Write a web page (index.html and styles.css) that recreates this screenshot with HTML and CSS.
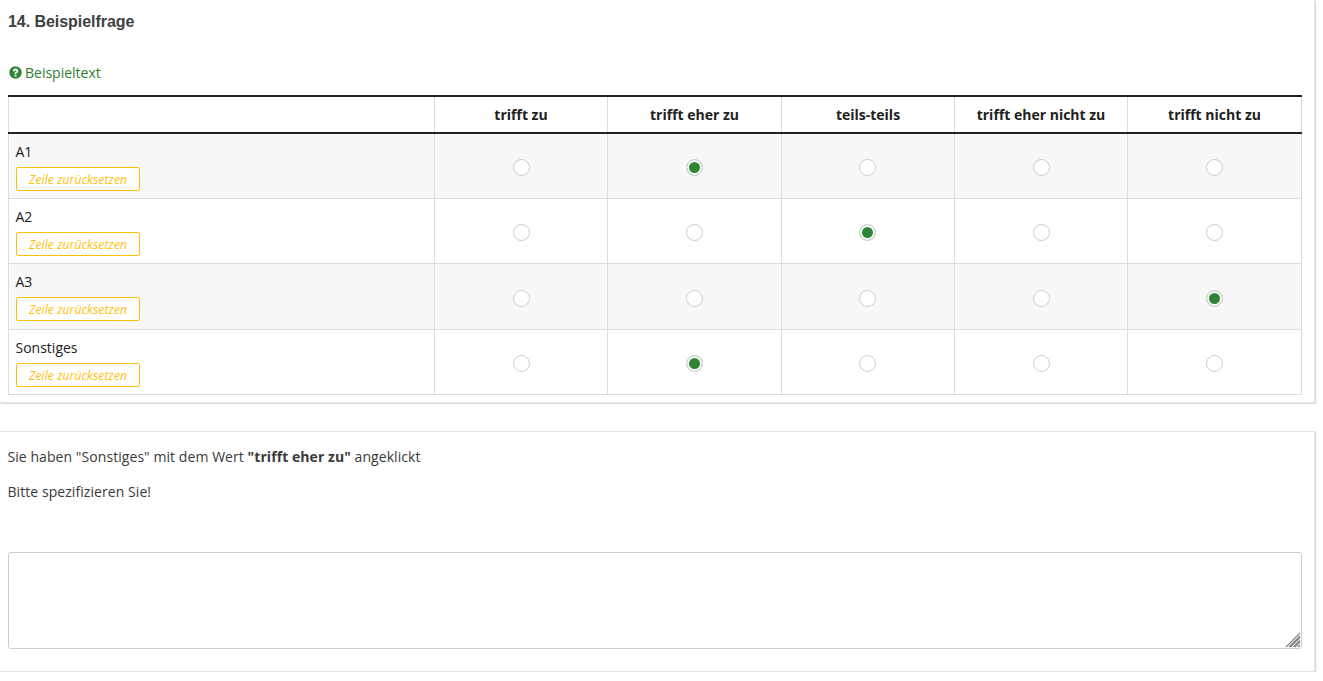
FILE: index.html
```html
<!DOCTYPE html>
<html lang="de">
<head>
<meta charset="utf-8">
<title>Beispielfrage</title>
<link rel="stylesheet" href="styles.css">
</head>
<body>
<div class="page">
<section class="panel panel-question">
  <h2 class="title">14. Beispielfrage</h2>
  <p class="hint"><svg class="hint-icon" viewBox="0 0 24 24" aria-hidden="true"><path fill="#2e8538" fill-rule="evenodd" d="M12 .5a11.500 11.500 0 1 0 0 23 11.500 11.500 0 0 0 0-23zm1.800 19h-3.600v-3.400h3.600zm2.900-8.100c-.4.600-1 1.100-1.700 1.500-.6.400-1 .7-1.100 1-.1.200-.2.500-.2.900h-3.400c0-1 .1-1.700.4-2.200.3-.5.800-1 1.500-1.400.6-.4 1-.7 1.200-.9.200-.3.300-.6.300-.9 0-.4-.1-.6-.4-.9-.3-.2-.6-.3-1.100-.3-.5 0-.9.200-1.200.5-.3.300-.5.800-.6 1.500L7.200 9.200c.1-1.400.6-2.500 1.400-3.300.9-.8 2.100-1.100 3.500-1.100 1.500 0 2.700.4 3.600 1.100.9.800 1.300 1.800 1.300 2.900 0 .9-.3 1.700-.7 2.600z"/></svg>Beispieltext</p>
  <table class="matrix">
    <colgroup><col class="col-label"><col class="col-a"><col class="col-b"><col class="col-a"><col class="col-a"><col class="col-b"></colgroup>
    <thead>
      <tr><th></th><th>trifft zu</th><th>trifft eher zu</th><th>teils-teils</th><th>trifft eher nicht zu</th><th>trifft nicht zu</th></tr>
    </thead>
    <tbody>
      <tr class="odd">
        <td class="label">A1<button class="reset" type="button">Zeile zurücksetzen</button></td>
        <td><input class="radio" type="radio" name="a1"></td><td><input class="radio" type="radio" name="a1" checked></td><td><input class="radio" type="radio" name="a1"></td><td><input class="radio" type="radio" name="a1"></td><td><input class="radio" type="radio" name="a1"></td>
      </tr>
      <tr>
        <td class="label">A2<button class="reset" type="button">Zeile zurücksetzen</button></td>
        <td><input class="radio" type="radio" name="a2"></td><td><input class="radio" type="radio" name="a2"></td><td><input class="radio" type="radio" name="a2" checked></td><td><input class="radio" type="radio" name="a2"></td><td><input class="radio" type="radio" name="a2"></td>
      </tr>
      <tr class="odd tall">
        <td class="label">A3<button class="reset" type="button">Zeile zurücksetzen</button></td>
        <td><input class="radio" type="radio" name="a3"></td><td><input class="radio" type="radio" name="a3"></td><td><input class="radio" type="radio" name="a3"></td><td><input class="radio" type="radio" name="a3"></td><td><input class="radio" type="radio" name="a3" checked></td>
      </tr>
      <tr>
        <td class="label">Sonstiges<button class="reset" type="button">Zeile zurücksetzen</button></td>
        <td><input class="radio" type="radio" name="a4"></td><td><input class="radio" type="radio" name="a4" checked></td><td><input class="radio" type="radio" name="a4"></td><td><input class="radio" type="radio" name="a4"></td><td><input class="radio" type="radio" name="a4"></td>
      </tr>
    </tbody>
  </table>
</section>
<section class="panel panel-followup">
  <p class="line">Sie haben "Sonstiges" mit dem Wert <strong>"trifft eher zu"</strong> angeklickt</p>
  <p class="line line-second">Bitte spezifizieren Sie!</p>
  <div class="answer-wrap">
    <textarea class="answer"></textarea>
    <svg class="grip" viewBox="0 0 16 16" aria-hidden="true"><path d="M1 15 15 1M4 15 15 4M5.500 15 15 5.500M8.500 15 15 8.500M10 15l5-5M13 15l2-2" stroke="#858585" stroke-width="1.200" fill="none"/></svg>
  </div>
</section>
</div>
</body>
</html>
```
FILE: styles.css
```css
* { box-sizing: border-box; }
html, body { margin: 0; padding: 0; background: #fff; }
body { font-family: "Open Sans", sans-serif; font-size: 14px; line-height: 20px; color: #3a3a3a; overflow: hidden; }
.page { width: 1315px; }
.panel { background: #fff; border: 1px solid #e4e4e4; border-left: 0; box-shadow: 1px 1px 1px #ddd; padding: 0 12px 0 8px; }
.panel-question { border-top: 0; height: 403px; padding-top: 12px; }
.panel-followup { margin-top: 28px; height: 241px; padding-top: 15px; }
.title { margin: 0; font-family: "Liberation Sans", Arial, sans-serif; font-size: 16px; line-height: 20px; font-weight: 700; letter-spacing: -.05px; color: #404040; }
.hint { margin: 31px 0 0; height: 20px; color: #2e7d32; display: flex; align-items: center; }
.hint-icon { width: 13px; height: 13px; margin: 0 3px 1px 1px; }
.matrix { margin-top: 12px; width: 1294px; table-layout: fixed; border-collapse: collapse; color: #212121; }
.col-label { width: 426px; }
.col-a { width: 173px; }
.col-b { width: 174px; }
.matrix th { height: 37px; padding: 0; border: 1px solid #ddd; border-top: 2px solid #222; border-bottom: 2px solid #222; text-align: center; font-weight: 700; color: #212121; }
.matrix td { height: 65px; padding: 0; border: 1px solid #ddd; text-align: center; vertical-align: middle; }
.matrix tr.tall td { height: 66px; }
.matrix td:nth-child(4) { padding-right: 1px; }
.matrix tr.odd td { background: #f8f8f8; }
.matrix td.label { text-align: left; padding: 7px 7px 6px 6.500px; line-height: 20px; }
.reset { display: block; width: 124px; height: 24px; margin: 5px 0 0 .5px; padding: 2px 0 0; background: #fff; border: 1px solid #ffc107; border-radius: 2px; color: #ffc107; font: italic 12px/20px "Open Sans", sans-serif; letter-spacing: .11px; }
.radio { appearance: none; display: block; width: 17px; height: 17px; margin: 4px auto 0; background: #fff; border: 1px solid #ccc; border-radius: 50%; }
.radio:checked { background: #2e8538; background-clip: padding-box; box-shadow: inset 0 0 0 2px #fff; }
.line { margin: 0 0 0 -.5px; height: 20px; letter-spacing: .065px; }
.line-second { margin-top: 15px; }
.answer-wrap { position: relative; margin-top: 50px; width: 1294px; height: 97px; }
.answer { display: block; width: 100%; height: 100%; margin: 0; border: 1px solid #ccc; border-radius: 3px; background: #fff; padding: 6px; font: inherit; resize: none; }
.grip { position: absolute; right: 1px; bottom: 1px; width: 16px; height: 16px; }
```
